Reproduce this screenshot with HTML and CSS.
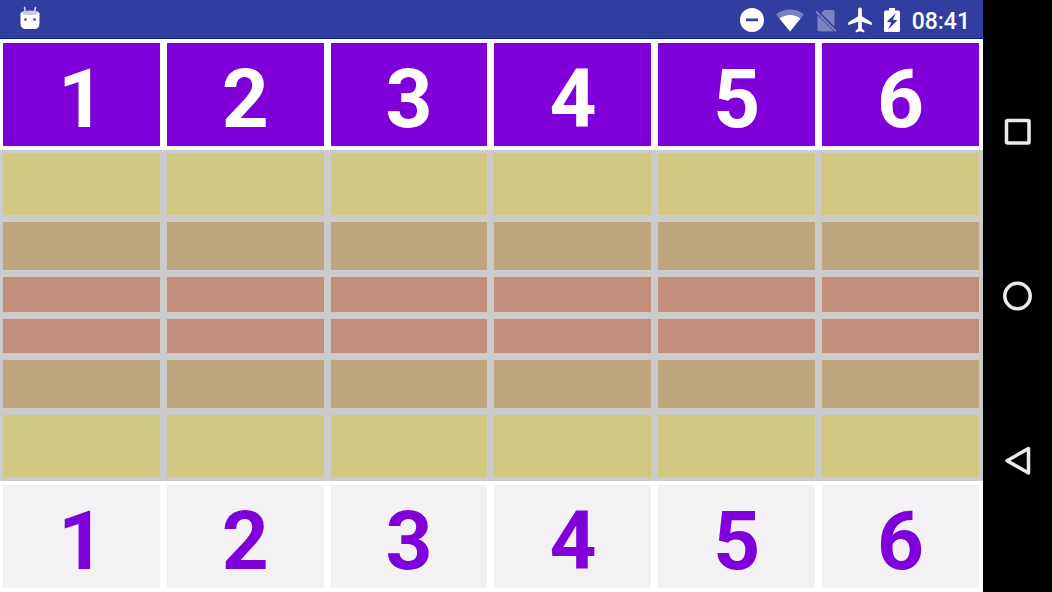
FILE: index.html
```html
<!DOCTYPE html>
<html lang="en">
<head>
    <meta charset="UTF-8">
    <meta name="viewport" content="width=device-width, initial-scale=1.0">
    <title>Board</title>
    <link rel="stylesheet" href="styles.css">
</head>
<body>
    <div class="screen">
        <header class="status">
            <svg class="robot" width="20" height="24" viewBox="0 0 20 24">
                <path d="M4.500 1.500L5.500 6M15.500 1.500L14.500 6" stroke="#d5d8ee" stroke-width="1.500" stroke-linecap="round"/>
                <path d="M.5 8Q.5 5.500 4 5.500H16Q19.500 5.500 19.500 8V17Q19.500 23 14 23H6Q.5 23 .5 17Z" fill="#fff"/>
                <path d="M2.500 6Q2.500 4.500 10 4.500T17.500 6V7.500Q16 9 10 9T2.500 7.500Z" fill="#c5c9e6"/>
                <circle cx="5.500" cy="13.500" r="1.300" fill="#303f9f"/>
                <circle cx="14.500" cy="13.500" r="1.300" fill="#303f9f"/>
            </svg>
            <div class="icons">
                <svg width="24" height="24" viewBox="0 0 24 24">
                    <circle cx="12" cy="12" r="12" fill="#fff"/>
                    <path d="M6 10.500H18V13.200H6Z" fill="#303f9f"/>
                </svg>
                <svg width="28" height="24" viewBox="0 0 28 24">
                    <path d="M14 23.500L0 6.200Q6 1.500 14 1.500T28 6.200Z" fill="#fff" opacity=".35"/>
                    <path d="M14 23.500L3.500 10.500Q8 7 14 7T24.500 10.500Z" fill="#fff"/>
                </svg>
                <svg width="20" height="24" viewBox="1 0 20 24">
                    <g fill="#7b84c1">
                        <path d="M9.500 2H17.500Q19.500 2 19.500 4V18.500L6.200 5.300Z"/>
                        <path d="M2.500 7.200L18.500 23Q18 23.500 17.500 23.500H4.500Q2.500 23.500 2.500 21.500Z"/>
                        <path d="M1 3.400L21 23.300" stroke="#7b84c1" stroke-width="1.800"/>
                    </g>
                </svg>
                <svg width="24" height="26" viewBox="2 1.500 19 21">
                    <path d="M21 16v-2l-8-5V3.500C13 2.670 12.330 2 11.500 2S10 2.670 10 3.500V9l-8 5v2l8-2.500V19l-2 1.500V22l3.500-1 3.500 1v-1.500L13 19v-5.500l8 2.500z" fill="#fff"/>
                </svg>
                <svg width="16" height="24" viewBox="0 0 16 24">
                    <path d="M5 0H11V2.500H14.500Q16 2.500 16 4V22.500Q16 24 14.500 24H1.500Q0 24 0 22.500V4Q0 2.500 1.500 2.500H5Z" fill="#fff"/>
                    <path d="M12 5L3 13.500L7.300 14.500L4 21.500L13.300 12.500L8.800 11.500Z" fill="#303f9f"/>
                </svg>
                <span class="time">08:41</span>
            </div>
        </header>

        <main class="board">
            <div class="row head">
                <div class="tile">1</div>
                <div class="tile">2</div>
                <div class="tile">3</div>
                <div class="tile">4</div>
                <div class="tile">5</div>
                <div class="tile">6</div>
            </div>
            <div class="lanes">
                <div class="row large">
                    <div class="cell"></div><div class="cell"></div><div class="cell"></div>
                    <div class="cell"></div><div class="cell"></div><div class="cell"></div>
                </div>
                <div class="row medium">
                    <div class="cell"></div><div class="cell"></div><div class="cell"></div>
                    <div class="cell"></div><div class="cell"></div><div class="cell"></div>
                </div>
                <div class="row small">
                    <div class="cell"></div><div class="cell"></div><div class="cell"></div>
                    <div class="cell"></div><div class="cell"></div><div class="cell"></div>
                </div>
                <div class="row small">
                    <div class="cell"></div><div class="cell"></div><div class="cell"></div>
                    <div class="cell"></div><div class="cell"></div><div class="cell"></div>
                </div>
                <div class="row medium">
                    <div class="cell"></div><div class="cell"></div><div class="cell"></div>
                    <div class="cell"></div><div class="cell"></div><div class="cell"></div>
                </div>
                <div class="row large">
                    <div class="cell"></div><div class="cell"></div><div class="cell"></div>
                    <div class="cell"></div><div class="cell"></div><div class="cell"></div>
                </div>
            </div>
            <div class="row foot">
                <div class="tile">1</div>
                <div class="tile">2</div>
                <div class="tile">3</div>
                <div class="tile">4</div>
                <div class="tile">5</div>
                <div class="tile">6</div>
            </div>
        </main>
    </div>

    <nav class="nav">
        <button class="nav-btn" aria-label="Recent apps">
            <svg width="30" height="30" viewBox="0 0 30 30">
                <rect x="3.500" y="3.500" width="22.500" height="22.500" rx="1"/>
            </svg>
        </button>
        <button class="nav-btn" aria-label="Home">
            <svg width="30" height="30" viewBox="0 0 30 30">
                <circle cx="14.500" cy="15" r="12.700"/>
            </svg>
        </button>
        <button class="nav-btn" aria-label="Back">
            <svg width="30" height="30" viewBox="0 0 30 30">
                <path d="M25.500 2.500V27L4 14.700Z"/>
            </svg>
        </button>
    </nav>
</body>
</html>
```
FILE: styles.css
```css
*{
    margin: 0;
    padding: 0;
    box-sizing: border-box;
}
body{
    display: flex;
    min-height: 100vh;
    font-family: Roboto, Arial, sans-serif;
    background-color: #000;
}
.screen{
    flex: 1;
    display: flex;
    flex-direction: column;
    background-color: #fff;
}

/* status bar */
.status{
    display: flex;
    justify-content: space-between;
    align-items: center;
    height: 39px;
    padding: 0 13px 0 20px;
    background-color: #303f9f;
    border-bottom: 1px solid #0a1f96;
}
.robot{
    margin-bottom: 2px;
}
.icons{
    display: flex;
    align-items: center;
    gap: 12px;
    padding-top: 2px;
}
.time{
    font-size: 23px;
    font-weight: 500;
    line-height: 24px;
    color: #fff;
    padding-top: 3px;
}

/* board */
.board{
    flex: 1;
    display: flex;
    flex-direction: column;
}
.row{
    flex: 1 1 0;
    display: grid;
    grid-template-columns: repeat(6, 1fr);
}
.tile{
    display: flex;
    justify-content: center;
    align-items: center;
    margin: 4px 4px 4px 3px;
    padding-top: 9px;
    font-size: 82px;
    font-weight: 700;
    line-height: 94px;
}
.head .tile{
    background-color: #8000d9;
    color: #fff;
}
.foot .tile{
    background-color: #f3f1f3;
    color: #8000d9;
}
.lanes{
    flex: 3 1 0;
    display: flex;
    flex-direction: column;
    background-color: #cbcbcb;
}
.cell{
    margin: 3px 4px 4px 3px;
}
.large{
    flex-grow: 5;
}
.medium{
    flex-grow: 4;
}
.small{
    flex-grow: 3;
}
.large .cell{
    background-color: #d0c880;
}
.medium .cell{
    background-color: #bea77e;
}
.small .cell{
    background-color: #c18f7b;
}

/* navigation bar */
.nav{
    width: 69px;
    display: flex;
    flex-direction: column;
    justify-content: space-between;
    padding: 97px 0;
}
.nav-btn{
    height: 69px;
    display: flex;
    justify-content: center;
    align-items: center;
    border: none;
    background-color: transparent;
}
.nav-btn svg{
    fill: none;
    stroke: #ebebeb;
    stroke-width: 3.5;
    stroke-linejoin: round;
}
```
